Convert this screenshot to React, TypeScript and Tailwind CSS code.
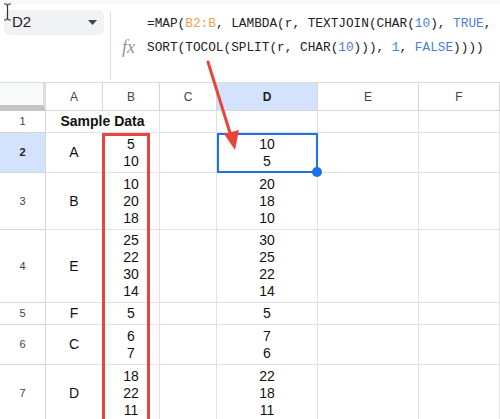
const cols = ["A", "B", "C", "D", "E", "F"];

const rows = [
  { n: 1, h: "h-[22px]", a: "", b: [] as string[], d: [] as string[], title: true },
  { n: 2, h: "h-[40px]", a: "A", b: ["5", "10"], d: ["10", "5"] },
  { n: 3, h: "h-[57px]", a: "B", b: ["10", "20", "18"], d: ["20", "18", "10"] },
  { n: 4, h: "h-[73px]", a: "E", b: ["25", "22", "30", "14"], d: ["30", "25", "22", "14"] },
  { n: 5, h: "h-[22px]", a: "F", b: ["5"], d: ["5"] },
  { n: 6, h: "h-[40px]", a: "C", b: ["6", "7"], d: ["7", "6"] },
  { n: 7, h: "h-[57px]", a: "D", b: ["18", "22", "11"], d: ["22", "18", "11"] },
];

function Cell({ lines, className = "" }: { lines: string[]; className?: string }) {
  return (
    <div className={`flex flex-col items-center justify-center border-r border-b border-[#e1e1e1] text-[14px] leading-[17px] text-[#111] ${className}`}>
      {lines.map((l, i) => (
        <span key={i}>{l}</span>
      ))}
    </div>
  );
}

export default function App() {
  const num = "text-[#4a7fd8]";
  return (
    <div className="relative w-[500px] h-[419px] overflow-hidden bg-white font-['Liberation_Sans',Arial,sans-serif]">
      {/* formula bar */}
      <div className="h-[4px] bg-[#f7f8fa]" />
      <div className="flex h-[79px] border-b border-[#dadce0]">
        <div className="pl-[4px] pt-[6px]">
          <div className="flex h-[25px] w-[100px] items-center justify-between rounded-[6px] bg-[#f0f2f5] pl-[8px] pr-[7px]">
            <span className="text-[15px] text-[#1f1f1f]">D2</span>
            <svg width="9" height="5" viewBox="0 0 9 5">
              <path d="M0 0h9L4.5 5z" fill="#444" />
            </svg>
          </div>
        </div>
        <div className="ml-[6px] mt-[8px] h-[68px] w-px bg-[#dadce0]" />
        <div className="relative flex-1">
          <span className="absolute left-[11px] top-[30px] font-['Liberation_Serif',serif] text-[18px] italic text-[#8f959b]">fx</span>
          <div className="pl-[36px] pt-[8px] font-['Liberation_Mono',monospace] text-[12.75px] leading-[24px] text-[#202124] whitespace-pre">
            <div>
              =MAP(<span className="text-[#f29c4c]">B2:B</span>, LAMBDA(r, TEXTJOIN(CHAR(<span className={num}>10</span>), <span className={num}>TRUE</span>,
            </div>
            <div>
              SORT(TOCOL(SPLIT(r, CHAR(<span className={num}>10</span>))), <span className={num}>1</span>, <span className={num}>FALSE</span>))))
            </div>
          </div>
        </div>
      </div>

      {/* sheet grid */}
      <div className="grid grid-cols-[46px_57px_57px_57px_101px_101px_81px]">
        <div className="h-[28px] bg-[#f8f9fa] border-r-[3px] border-r-[#dadce0] border-b-[6px] border-b-[#c4c4c4]" />
        {cols.map((c) => (
          <div
            key={c}
            className={`flex h-[28px] items-center justify-center border-r border-b border-[#d6d6d6] text-[12px] ${
              c === "D" ? "bg-[#d3e3fd] font-bold text-[#1f1f1f]" : "text-[#444]"
            }`}
          >
            {c}
          </div>
        ))}

        {rows.map((r) => (
          <div key={r.n} className="contents">
            <div
              className={`flex ${r.h} items-center justify-center border-r border-b border-[#d6d6d6] text-[11px] ${
                r.n === 2 ? "bg-[#d3e3fd] font-bold text-[#1f1f1f]" : "text-[#444]"
              }`}
            >
              {r.n}
            </div>
            {r.title ? (
              <div className={`col-span-2 flex ${r.h} items-center justify-center border-r border-b border-[#e1e1e1] text-[14px] font-bold text-[#111]`}>
                Sample Data
              </div>
            ) : (
              <>
                <Cell lines={[r.a]} className={r.h} />
                <Cell lines={r.b} className={r.h} />
              </>
            )}
            <Cell lines={[]} className={r.h} />
            <Cell lines={r.d} className={r.h} />
            <Cell lines={[]} className={r.h} />
            <Cell lines={[]} className={r.h} />
          </div>
        ))}
      </div>

      {/* red highlight around column B */}
      <div className="absolute left-[102px] top-[133px] h-[300px] w-[48px] border-[3px] border-[#e8453c]" />

      {/* selection on D2 */}
      <div className="absolute left-[217px] top-[133px] h-[40px] w-[101px] border-2 border-[#1a73e8]" />
      <div className="absolute left-[312px] top-[167px] h-[10px] w-[10px] rounded-full bg-[#1a73e8]" />

      {/* arrow */}
      <svg className="absolute left-0 top-0" width="500" height="419" viewBox="0 0 500 419">
        <line x1="208" y1="62" x2="231" y2="136" stroke="#e8453c" strokeWidth="3" strokeLinecap="round" />
        <path d="M235 150 L224 134 L239 130 Z" fill="#e8453c" />
      </svg>

      {/* I-beam cursor */}
      <svg className="absolute left-[3px] top-[3px]" width="9" height="18" viewBox="0 0 9 18">
        <path d="M1 1h2.5M5.5 1H8M4.5 2v14M1 17h2.5M5.5 17H8M3.5 1.5L4.5 2.5L5.5 1.5M3.5 16.5L4.5 15.5L5.5 16.5" stroke="#333" strokeWidth="1.2" fill="none" />
      </svg>
    </div>
  );
}
